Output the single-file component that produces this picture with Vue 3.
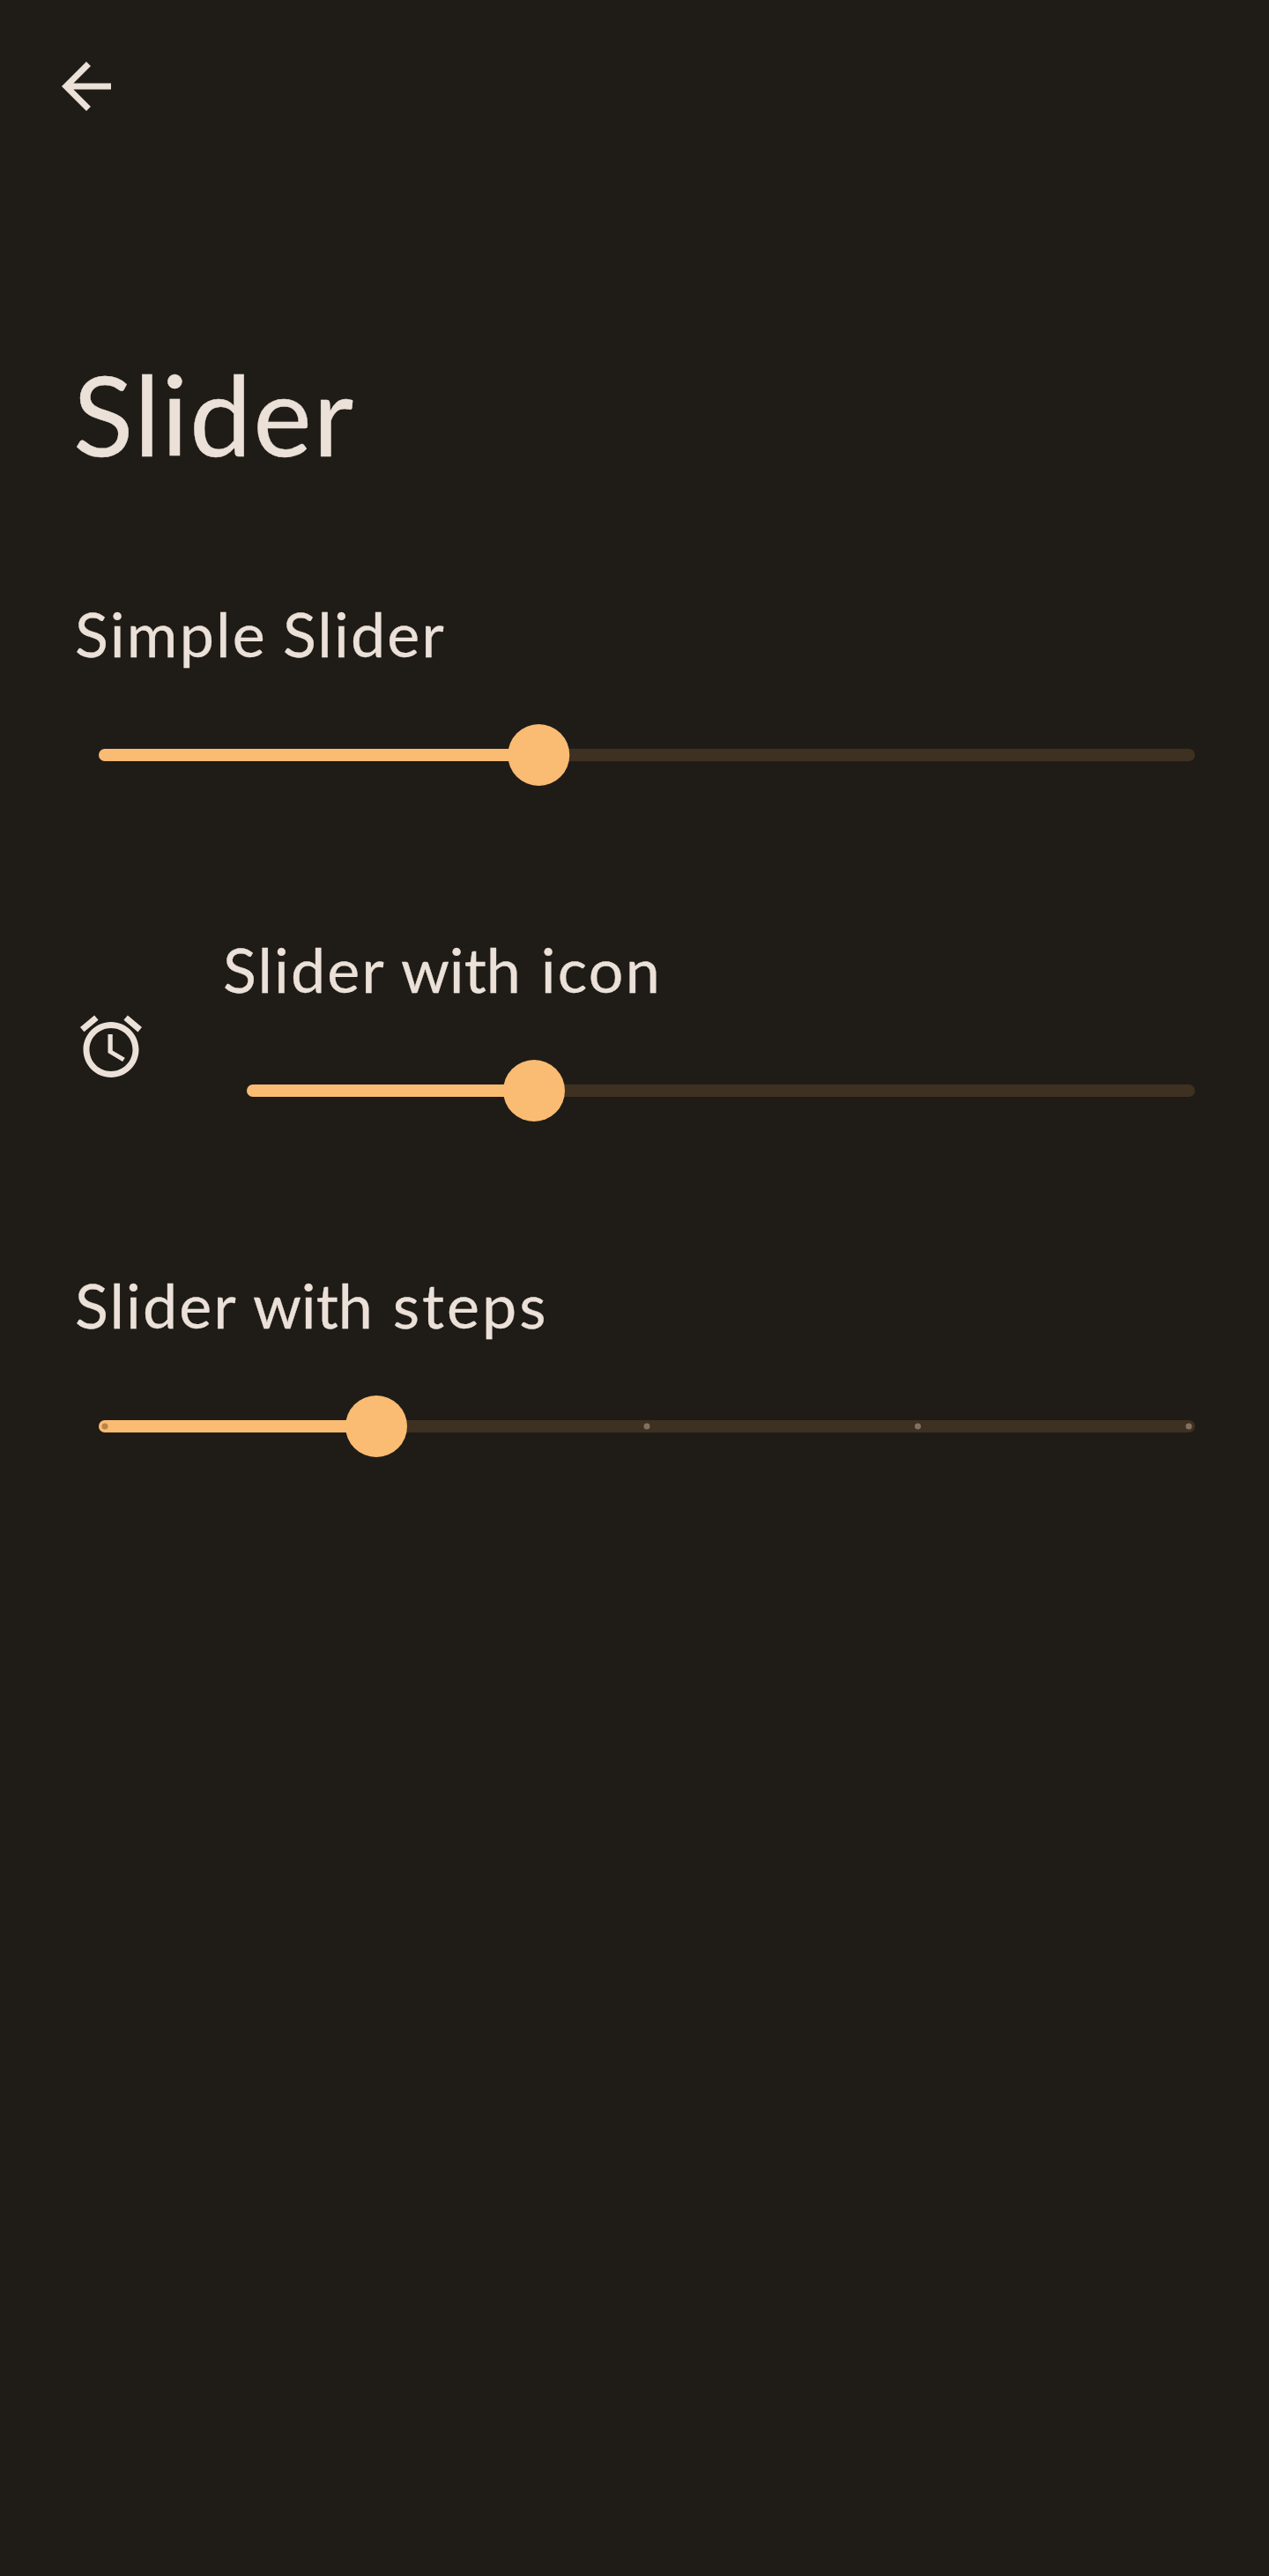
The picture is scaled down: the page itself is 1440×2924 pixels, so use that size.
<script setup>
const sliders = [
  {
    kind: 'simple',
    icon: false,
    words: [['Simple', 'loose'], ['Slider', 'medium']],
    length: 1244,
    thumb: 499.3,
    ticks: [],
  },
  {
    kind: 'icon',
    icon: true,
    words: [['Slider', 'medium'], ['with', 'tight'], ['icon', 'narrow']],
    length: 1076,
    thumb: 326,
    ticks: [],
  },
  {
    kind: 'steps',
    icon: false,
    words: [['Slider', 'medium'], ['with', 'tight'], ['steps', 'wide']],
    length: 1244,
    thumb: 315,
    ticks: [7, 622, 929.5, 1237],
  },
]
</script>

<template>
  <main class="screen">
    <header class="bar">
      <svg class="glyph" viewBox="0 0 24 24">
        <path d="M20,11H7.83l5.59,-5.59L12,4l-8,8 8,8 1.41,-1.41L7.83,13H20v-2z" />
      </svg>
    </header>
    <h1 class="title">Slider</h1>
    <section v-for="s in sliders" :key="s.kind" class="row">
      <svg v-if="s.icon" class="glyph alarm" viewBox="0 0 24 24">
        <path d="M22,5.72l-4.6,-3.86 -1.29,1.53 4.6,3.86L22,5.72zM7.88,3.39L6.6,1.86 2,5.71l1.29,1.53 4.59,-3.85zM12.5,8L11,8v6l4.75,2.85 0.75,-1.23 -4,-2.37L12.5,8zM12,4c-4.97,0 -9,4.03 -9,9s4.02,9 9,9c4.97,0 9,-4.03 9,-9s-4.03,-9 -9,-9zM12,20c-3.87,0 -7,-3.13 -7,-7s3.13,-7 7,-7 7,3.13 7,7 -3.13,7 -7,7z" />
      </svg>
      <div class="body">
        <div class="label">
          <template v-for="(w, i) in s.words" :key="i">{{ i ? ' ' : '' }}<span :class="w[1]">{{ w[0] }}</span></template>
        </div>
        <div class="slider">
          <div class="track">
            <div class="active" :style="{ width: s.thumb + 'px' }"></div>
            <svg class="marks" :width="s.length" height="70" :viewBox="`0 0 ${s.length} 70`">
              <circle
                v-for="t in s.ticks"
                :key="t"
                :class="['tick', { on: t < s.thumb }]"
                :cx="t"
                cy="35"
                r="3.5"
              />
              <circle class="thumb" :cx="s.thumb" cy="35" r="35" />
            </svg>
          </div>
        </div>
      </div>
    </section>
  </main>
</template>

<style>
body {
  margin: 0;
  background: #1f1c17;
}
</style>

<style scoped>
.screen {
  box-sizing: border-box;
  min-height: 2924px;
  background: #1f1c17;
  color: #ebe1d9;
  font-family: Lato, "Open Sans", sans-serif;
}
.bar {
  height: 392px;
  padding: 56px 56px 0;
  box-sizing: border-box;
}
.glyph {
  display: block;
  flex: none;
  width: 84px;
  height: 84px;
  fill: currentColor;
}
.title {
  box-sizing: border-box;
  margin: 0;
  padding: 1px 0 0 83px;
  height: 278px;
  font-size: 126px;
  line-height: 154px;
  font-weight: 400;
  letter-spacing: 1.6px;
  -webkit-text-stroke: 0.4px currentColor;
}
.row {
  display: flex;
  align-items: center;
  height: 276px;
  margin-bottom: 105px;
  padding: 0 84px;
}
.alarm {
  margin: 0 84px 2px 0;
}
.body {
  flex: 1;
}
.label {
  height: 98px;
  padding-left: 1px;
  font-size: 70px;
  line-height: 98px;
  white-space: nowrap;
  -webkit-text-stroke: 0.3px currentColor;
}
.loose {
  letter-spacing: 2.2px;
}
.medium {
  letter-spacing: 2.1px;
}
.tight {
  margin: 0 5px 0 -1px;
}
.narrow {
  letter-spacing: 2.2px;
}
.wide {
  letter-spacing: 3px;
}
.slider {
  display: flex;
  align-items: center;
  height: 178px;
  padding-left: 28px;
}
.track {
  position: relative;
  flex: 1;
  height: 14px;
  border-radius: 7px;
  background: #3e3122;
}
.active {
  height: 14px;
  border-radius: 7px;
  background: #fabb73;
}
.marks {
  position: absolute;
  top: -28px;
  left: 0;
  overflow: visible;
}
.thumb {
  fill: #fabb73;
}
.tick {
  fill: #81725f;
}
.tick.on {
  fill: #b78648;
}
</style>
